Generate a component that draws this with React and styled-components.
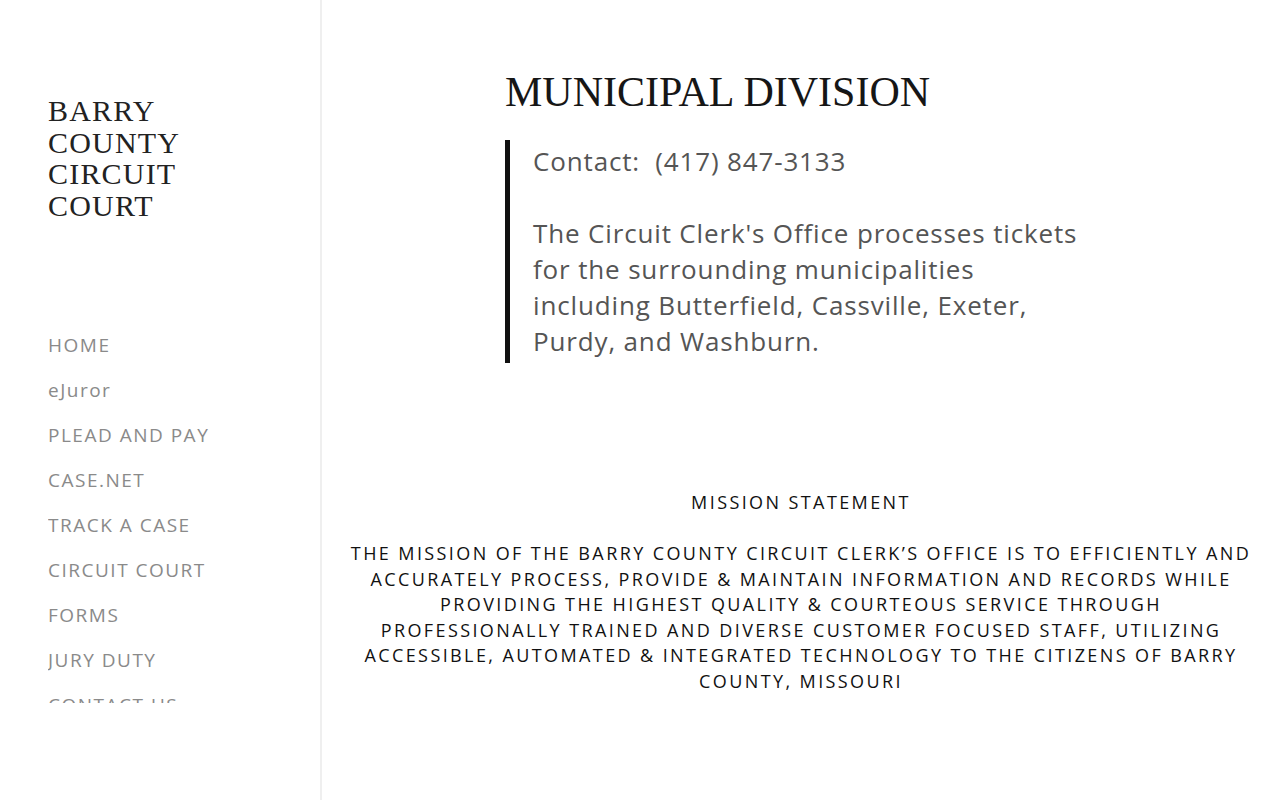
import React from 'react';
import styled, { createGlobalStyle } from 'styled-components';

const SANS = `'Open Sans', 'Liberation Sans', sans-serif`;
const SERIF = `'Liberation Serif', 'DejaVu Serif', serif`;

const GlobalStyle = createGlobalStyle`
  html, body {
    margin: 0;
    padding: 0;
    background: #ffffff;
  }
  body {
    font-family: ${SANS};
  }
`;

const NAV_ITEMS = [
  'HOME',
  'eJuror',
  'PLEAD AND PAY',
  'CASE.NET',
  'TRACK A CASE',
  'CIRCUIT COURT',
  'FORMS',
  'JURY DUTY',
  'CONTACT US',
];

const App = () => (
  <>
    <GlobalStyle />
    <Page>
      <Sidebar>
        <SiteTitle>
          BARRY
          <br />
          COUNTY
          <br />
          CIRCUIT
          <br />
          COURT
        </SiteTitle>
        <Nav>
          {NAV_ITEMS.map((item) => (
            <NavLink key={item} href="#">
              {item}
            </NavLink>
          ))}
        </Nav>
      </Sidebar>
      <Main>
        <Content>
          <Heading>MUNICIPAL DIVISION</Heading>
          <Quote>
            Contact:&nbsp; (417) 847-3133
            <br />
            <br />
            The Circuit Clerk's Office processes tickets for the surrounding
            municipalities including Butterfield, Cassville, Exeter, Purdy, and
            Washburn.
          </Quote>
        </Content>
        <Mission>
          <MissionTitle>MISSION STATEMENT</MissionTitle>
          THE MISSION OF THE BARRY COUNTY CIRCUIT CLERK’S OFFICE IS TO
          EFFICIENTLY AND ACCURATELY PROCESS, PROVIDE &amp; MAINTAIN INFORMATION
          AND RECORDS WHILE PROVIDING THE HIGHEST QUALITY &amp; COURTEOUS
          SERVICE THROUGH PROFESSIONALLY TRAINED AND DIVERSE CUSTOMER FOCUSED
          STAFF, UTILIZING ACCESSIBLE, AUTOMATED &amp; INTEGRATED TECHNOLOGY TO
          THE CITIZENS OF BARRY COUNTY, MISSOURI
        </Mission>
      </Main>
    </Page>
  </>
);

const Page = styled.div`
  display: flex;
  min-height: 100vh;
`;

const Sidebar = styled.aside`
  flex: 0 0 322px;
  box-sizing: border-box;
  height: 100vh;
  padding: 95px 48px 0;
  border-right: 2px solid #efefef;
  display: flex;
  flex-direction: column;
`;

const SiteTitle = styled.h1`
  margin: 0;
  font-family: ${SERIF};
  font-weight: 400;
  font-size: 30px;
  line-height: 31.5px;
  letter-spacing: 1.2px;
  color: #222222;
`;

const Nav = styled.nav`
  margin-top: 110px;
  height: 372px;
  overflow: hidden;
  display: flex;
  flex-direction: column;
  gap: 17px;
`;

const NavLink = styled.a`
  display: block;
  font-family: ${SANS};
  font-size: 19px;
  line-height: 28px;
  letter-spacing: 1.5px;
  color: #8a8a8a;
  text-decoration: none;
`;

const Main = styled.main`
  flex: 1;
  padding: 68px 26px 0;
`;

const Content = styled.div`
  width: 592px;
  margin: 0 auto;
`;

const Heading = styled.h2`
  margin: 0 0 24px;
  font-family: ${SERIF};
  font-weight: 400;
  font-size: 42px;
  line-height: 48px;
  color: #161616;
`;

const Quote = styled.blockquote`
  margin: 0;
  padding: 3px 0 4px 23px;
  border-left: 5px solid #111111;
  font-family: ${SANS};
  font-size: 26px;
  line-height: 36px;
  letter-spacing: 0.85px;
  color: #555555;
`;

const Mission = styled.div`
  margin-top: 127px;
  text-align: center;
  font-family: ${SANS};
  font-size: 18px;
  line-height: 25.5px;
  letter-spacing: 2.4px;
  color: #111111;
`;

const MissionTitle = styled.div`
  margin-bottom: 25.5px;
`;

export default App;
